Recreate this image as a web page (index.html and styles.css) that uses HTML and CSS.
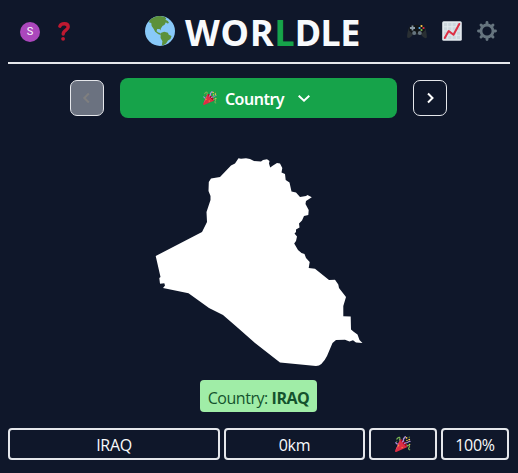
FILE: index.html
```
<!DOCTYPE html>
<html lang="en">
<head>
<meta charset="utf-8">
<title>Worldle</title>
<link rel="stylesheet" href="styles.css">
</head>
<body>
<svg class="defs" width="0" height="0" aria-hidden="true">
  <symbol id="party" viewBox="0 0 36 36">
    <path fill="#DD2E44" d="M11.6 7.600c-.2.2-.3.4-.4.6L.1 33.200c-.4 1.500 1.100 3.200 2.600 2.700L28 25c1.500-1.500-1-6.500-5.600-11S13 6.200 11.600 7.600z"/>
    <path fill="#EA596E" d="M11 9 1 32c5-5 8-12 10-23z"/>
    <path fill="#A0041E" d="M12 8c2 0 6 2.500 9.500 6S28 22 27.500 24.500C24 24 13 13 12 8z"/>
    <path fill="#FFAC33" d="M7 19l3 3-3 2zm8 5l3 2-3 2z"/>
    <path fill="none" stroke="#AA8DD8" stroke-width="3" stroke-linecap="round" d="M17 13c5-4 0-6 3-8 2-2 3 0 3-4M2 15l3 3"/>
    <path fill="none" stroke="#77B255" stroke-width="2.700" stroke-linecap="round" d="M4 7c5-7 9-4 6 2M27 22c4-3 7 0 5 3s-2 5 1 6"/>
    <path fill="none" stroke="#AA8DD8" stroke-width="2.500" stroke-linecap="round" d="M21 17c4-4 6 0 8-3s4-1 5-2"/>
    <g fill="#FFCC4D"><circle cx="26" cy="4" r="2"/><circle cx="32" cy="8" r="2"/><circle cx="27" cy="10" r="1.700"/><circle cx="33" cy="19" r="1.500"/></g>
    <g fill="#5C913B"><circle cx="32" cy="3" r="1.600"/><circle cx="4" cy="12" r="1.500"/></g>
  </symbol>
</svg>
<div class="page">
  <header class="header">
    <div class="side left">
      <span class="avatar">S</span>
      <svg class="help" viewBox="0 0 12 19"><path fill="none" stroke="#BE1931" stroke-width="3.400" stroke-linecap="round" stroke-linejoin="round" d="M1.900 4.200C3 1.100 10.200.600 10.200 5c0 3.200-5 3-5 7"/><circle cx="5.100" cy="16.800" r="1.900" fill="#BE1931"/></svg>
    </div>
    <h1 class="title">
      <svg class="globe" viewBox="0 0 36 36"><circle cx="18" cy="18" r="18" fill="#88C9F9"/><path fill="#5C913B" d="M5.500 5C9 2 13 .3 18 .1c2 .2 4 .6 6 1.200l1.500 1.700-1 1.500 3 1.500 1.300 2.500-2 .4-1.800-1.400-1.500 3-2.500 1.500-2 3-.5 2.500-1-2-3 .2-.6 2.500 2 1.500 2.300.8 1 2.200-3-.7-4-3-1.700-3.500L8 12l-.5-3.500-2.500-.8z"/><path fill="#5C913B" d="m18.800 20.500 4.200-1.700 4.500 1.400 1 2.300 3.300 1.500-1.200 3.500-3 2-2.300 3.500-3.800 2.400-1.200-.8.600-4.300-2.200-4z"/></svg>
      <span class="word"><span class="wide">WOR</span><em>L</em><span class="tight">DLE</span></span>
    </h1>
    <div class="side right">
      <svg class="icon" viewBox="0 0 20 20"><path fill="#292F33" d="M3 5.200 7 4h6l4 1.200c1.500 1.500 3.200 8 2.800 11.400-1.700 1.500-4-.4-5.600-3.100H5.800C4.200 16.200 2 18 .2 16.600-.2 13.200 1.500 6.700 3 5.200z"/><path fill="#111518" d="M3 5.200 7 4h6l4 1.200 1 4-3 3H5l-3-3z"/><path stroke="#8899A6" stroke-width="1.800" d="M5.500 4.500v5M3 7h5"/><g fill="#66757F"><circle cx="7.200" cy="12" r="2"/><circle cx="12.800" cy="12" r="2"/></g><circle cx="14.500" cy="5" r="1.100" fill="#FFCC4D"/><circle cx="12.500" cy="7" r="1.100" fill="#55ACEE"/><circle cx="16.500" cy="7" r="1.100" fill="#DD2E44"/><circle cx="14.500" cy="9" r="1.100" fill="#77B255"/></svg>
      <svg class="icon" viewBox="0 0 20 20"><rect x=".2" y=".2" width="19.600" height="19.600" rx="1.500" fill="#E1E8ED"/><path fill="#CCD6DD" d="M2 2h3.200v3.200H2zm4.200 0h3.300v3.200H6.200zm4.300 0h3.300v3.200h-3.300zm4.300 0H18v3.200h-3.200zM2 6.200h3.200v3.300H2zm4.200 0h3.300v3.300H6.200zm4.300 0h3.300v3.300h-3.300zm4.300 0H18v3.300h-3.200zM2 10.500h3.200v3.300H2zm4.200 0h3.300v3.300H6.200zm4.300 0h3.300v3.300h-3.300zm4.300 0H18v3.300h-3.200zM2 14.800h3.200V18H2zm4.200 0h3.300V18H6.200zm4.300 0h3.300V18h-3.300zm4.300 0H18V18h-3.200z"/><path fill="none" stroke="#DD2E44" stroke-width="2" stroke-linecap="round" stroke-linejoin="round" d="m2.700 17 4-7 4.800 3.800L17.300 3"/></svg>
      <svg class="icon" viewBox="0 0 20 20"><circle cx="10" cy="10" r="6" fill="none" stroke="#66757F" stroke-width="2.800"/><path stroke="#66757F" stroke-width="2.900" stroke-linecap="round" d="M10 1.500v2M10 16.500v2M1.500 10h2M16.500 10h2M4 4l1.400 1.400M14.600 14.600 16 16M4 16l1.400-1.400M14.600 5.400 16 4"/></svg>
    </div>
  </header>
  <nav class="rounds">
    <button class="step disabled" disabled aria-label="Previous"><svg viewBox="0 0 14 14"><path d="M8.800 2.500 4.300 7l4.500 4.500"/></svg></button>
    <button class="round"><svg class="party"><use href="#party"/></svg><span>Country</span><svg class="chevron" viewBox="0 0 14 14"><path d="m1.700 4.700 5.300 5 5.300-5"/></svg></button>
    <button class="step" aria-label="Next"><svg viewBox="0 0 14 14"><path d="M5 2.500 9.500 7 5 11.500"/></svg></button>
  </nav>
  <svg class="map" viewBox="155 157 208 210"><path fill="#fff" d="M155.700 256 202 232 207 222 206.500 212 209.500 203 210.500 200 210.500 196 208.500 191 208.800 182 211 178.500 220 177 231 165.500 235 163.500 238.500 158.300 241 158.800 246 158.300 250 159 254 161 261 161.500 263 160 267 159.300 269.500 161 269 163.500 270.200 167.500 273 165.500 277 163 280 163.500 282.300 168 281.500 172.500 285 174 285.700 180 289.500 182.500 291.500 191.500 296 192.500 300 197 306 196 307.500 195 311.800 197.300 306 201 305.500 204 308.700 210 308.300 215 304 216 302 220.500 299 223.500 299.500 227.500 296 229.500 296 232 294.500 233.500 297 236.500 296 241 294.200 243.500 298 250 301.500 253 304.500 254 306 258 309.700 262 308.700 268 315 268.700 329 280 335 279.800 338.300 284.500 339 288 346 297 343.300 306 343.300 316.200 350.700 316.500 351 329.500 354 332 357.500 334.500 359.500 340 362.500 343 356 342.500 353 340.300 349.500 341.500 345 339.700 336 340 332.500 343 327 356Q322 366 316 366L280 362.500 255 343 238 328 223 315 209 308 188.500 293.300 163 288 165 285.500 164.300 283.300 160 283.700 159.300 278 160.500 277z"/></svg>
  <div class="answer">Country: <strong>IRAQ</strong></div>
  <div class="guess">
    <div>IRAQ</div>
    <div>0km</div>
    <div><svg class="party"><use href="#party"/></svg></div>
    <div>100%</div>
  </div>
</div>
</body>
</html>
```
FILE: styles.css
```
* { box-sizing: border-box; }
body {
  margin: 0;
  background: #0f172a;
  color: #f8fafc;
  font: 16px/24px "Open Sans", "Noto Sans", sans-serif;
}
svg { display: block; flex: none; }
.defs { position: absolute; }
.page {
  width: 518px;
  height: 473px;
  padding: 0 8px;
  display: flex;
  flex-direction: column;
  align-items: center;
  overflow: hidden;
}
.header {
  width: 502px;
  height: 64px;
  border-bottom: 2px solid #e5e7eb;
  display: grid;
  grid-template-columns: 137px 241px 124px;
  align-items: center;
}
.side { display: flex; align-items: center; }
.left { padding-left: 12px; gap: 18px; padding-top: 1px; }
.right { gap: 15px; padding-left: 21px; }
.avatar {
  width: 20px;
  height: 20px;
  border-radius: 50%;
  background: #ab47bc;
  font: 11px/20px Roboto, sans-serif;
  text-align: center;
}
.help { width: 12px; height: 19px; }
.icon { width: 20px; height: 20px; }
.title { margin: 0; display: flex; align-items: center; }
.globe { width: 30px; height: 30px; }
.word {
  margin: 3px 0 0 10px;
  font: 700 36px/40px "Noto Sans", sans-serif;
  white-space: nowrap;
}
.word em { font-style: normal; color: #16a34a; }
.wide { letter-spacing: 1px; }
.tight { letter-spacing: -.5px; }
.rounds {
  margin-top: 14px;
  display: flex;
  align-items: center;
  gap: 16px;
  align-self: flex-start;
  padding-left: 62px;
}
button { padding: 0; border: 0; color: #fff; font: inherit; }
button path { fill: none; stroke: currentColor; stroke-width: 2; }
.step {
  width: 34px;
  height: 36px;
  border: 1px solid #e5e7eb;
  border-radius: 7px;
  background: transparent;
  display: grid;
  place-items: center;
}
.step svg { width: 14px; height: 14px; }
.disabled { background: #6b7280; color: #7f7f7f; }
.round {
  width: 277px;
  height: 40px;
  padding-right: 3px;
  border-radius: 8px;
  background: #16a34a;
  display: flex;
  align-items: center;
  justify-content: center;
  font: 600 16px/24px "Noto Sans", sans-serif;
}
.round .party { width: 14px; height: 14px; margin-right: 8px; }
.round span { margin-top: 2px; letter-spacing: -.5px; }
.chevron { width: 14px; height: 14px; margin: -1px 0 0 13px; }
.map { width: 208px; height: 210px; margin-top: 39px; }
.answer {
  width: 117px;
  height: 32px;
  margin: 13px 1px 0 0;
  padding-top: 6px;
  border-radius: 4px;
  background: #a0eda7;
  color: #14532d;
  text-align: center;
  white-space: nowrap;
  letter-spacing: -.45px;
}
.answer strong { font-weight: 700; }
.guess {
  margin-top: 16px;
  align-self: flex-start;
  display: grid;
  grid-template-columns: 212px 141px 68px 68px;
  gap: 4px;
}
.guess div {
  height: 32px;
  border: 2px solid #e5e7eb;
  border-radius: 4px;
  display: flex;
  align-items: center;
  justify-content: center;
  padding-top: 2px;
  letter-spacing: -.3px;
}
.guess .party { width: 16px; height: 16px; margin-top: -2px; }
```
